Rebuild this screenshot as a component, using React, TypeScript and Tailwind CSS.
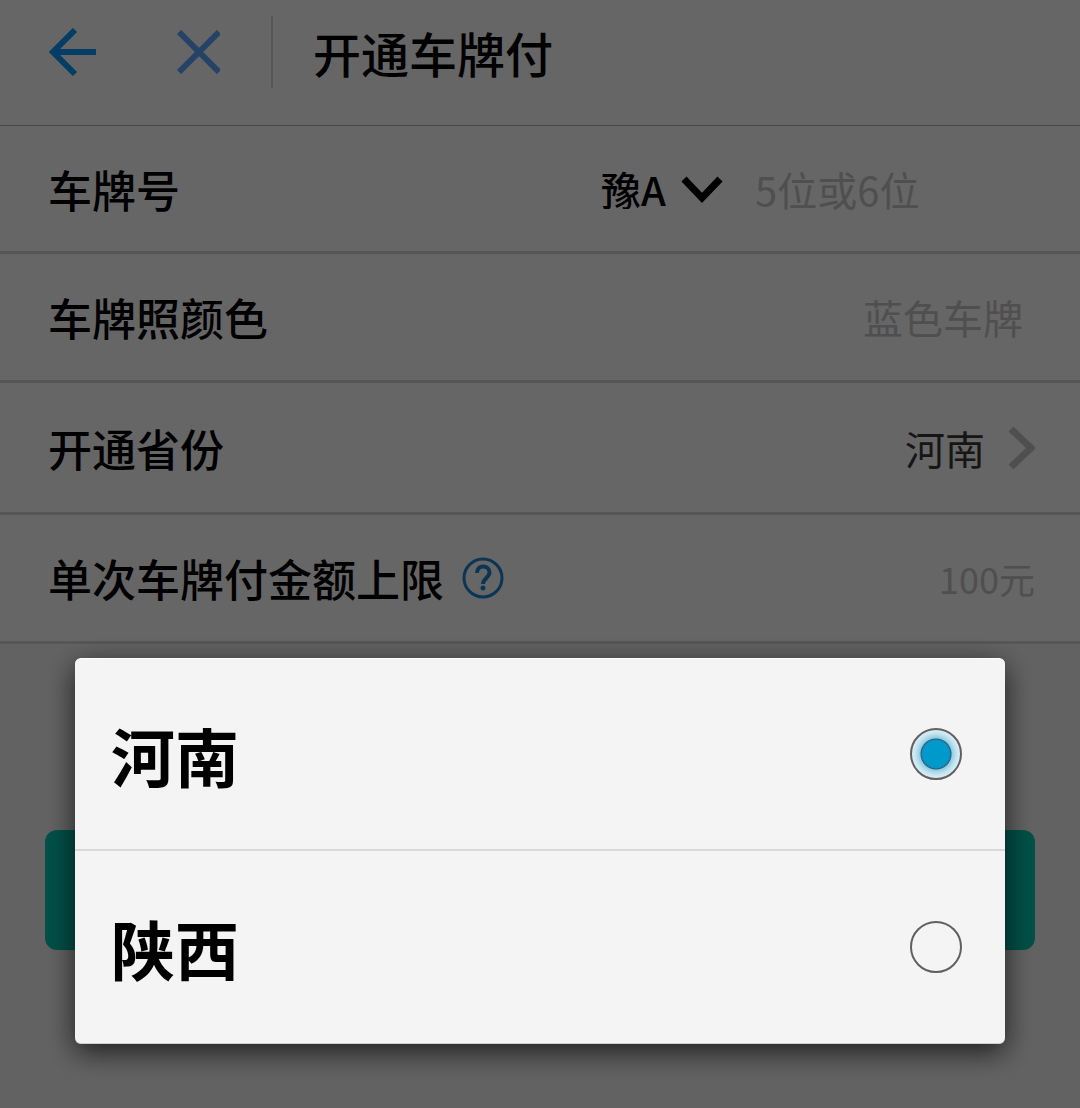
import { useState, type ReactNode } from "react";
import clsx from "clsx";

const provinces = ["河南", "陕西"];

function BackIcon() {
  return (
    <svg width="48" height="48" viewBox="0 0 48 48" fill="none" stroke="#0c9bff" strokeWidth="6">
      <path d="M27 2 5 24l22 22M5 24h43" />
    </svg>
  );
}

function CloseIcon() {
  return (
    <svg width="44" height="44" viewBox="0 0 44 44" fill="none" stroke="#5ea8ff" strokeWidth="6">
      <path d="M3 2l40 40M43 2 3 42" />
    </svg>
  );
}

function HelpIcon() {
  return (
    <svg width="42" height="42" viewBox="0 0 42 42" fill="none" stroke="#1a86d4" strokeWidth="3">
      <circle cx="21" cy="21" r="19" />
      <path
        d="M15 16c0-4 2.500-6.500 6.200-6.500s6.300 2.300 6.300 6c0 5-6.500 6-6.500 11.500"
        strokeWidth="4"
      />
      <circle cx="21" cy="31" r="2.500" fill="#1a86d4" stroke="none" />
    </svg>
  );
}

function FormRow({ className, children }: { className: string; children: ReactNode }) {
  return (
    <div
      className={clsx(
        "flex items-center justify-between border-b-3 border-[#d6d6d6] pr-[45px] pl-12",
        className
      )}
    >
      {children}
    </div>
  );
}

export default function App() {
  const [province, setProvince] = useState("河南");
  const [plate, setPlate] = useState("");

  return (
    <div className="min-h-screen bg-[#f4f4f4] font-['Noto_Sans_CJK_SC',sans-serif] text-[44px] leading-none font-medium text-black">
      <div className="bg-white">
        <header className="flex items-center border-b border-[#b0b0b0] px-12 pt-4 pb-[37px]">
          <button aria-label="返回">
            <BackIcon />
          </button>
          <button aria-label="关闭" className="ml-20">
            <CloseIcon />
          </button>
          <div className="ml-[51px] h-[72px] w-0.5 bg-[#d6d6d6]" />
          <h1 className="ml-10 text-[48px]">开通车牌付</h1>
        </header>

        <FormRow className="min-h-[128px]">
          <label htmlFor="plate">车牌号</label>
          <div className="flex items-center gap-8 text-[40px]">
            <div className="relative">
              <select
                aria-label="车牌归属地"
                className="w-[122px] appearance-none bg-transparent leading-none"
              >
                <option>豫A</option>
              </select>
              <svg
                className="pointer-events-none absolute top-1/2 right-0 -translate-y-1/2"
                width="42"
                height="30"
                viewBox="0 0 42 30"
                fill="none"
                stroke="#000"
                strokeWidth="7"
              >
                <path d="M3 5l18 19L39 5" />
              </svg>
            </div>
            <input
              id="plate"
              value={plate}
              onChange={(e) => setPlate(e.target.value)}
              placeholder="5位或6位"
              className="w-[280px] bg-transparent leading-none font-normal outline-none placeholder:text-[#c6c6c6]"
            />
          </div>
        </FormRow>

        <FormRow className="min-h-[129px]">
          <span>车牌照颜色</span>
          <span className="pr-3 text-[40px] font-normal text-[#c6c6c6]">蓝色车牌</span>
        </FormRow>

        <FormRow className="min-h-[132px]">
          <span>开通省份</span>
          <button className="flex items-center gap-6 text-[40px] font-normal text-[#383838]">
            {province}
            <svg width="26" height="44" viewBox="0 0 26 44" fill="none" stroke="#c6c6c6" strokeWidth="7">
              <path d="M2 3l20 19L2 41" />
            </svg>
          </button>
        </FormRow>

        <FormRow className="min-h-[129px]">
          <div className="flex items-center gap-[18px]">
            <span>单次车牌付金额上限</span>
            <button aria-label="额度说明">
              <HelpIcon />
            </button>
          </div>
          <span className="text-[36px] font-normal text-[#c6c6c6]">100元</span>
        </FormRow>
      </div>

      <div className="px-[45px] pt-[186px]">
        <button
          aria-label="立即开通"
          className="block h-[120px] w-full rounded-xl bg-[#05c8b2]"
        />
      </div>

      <div className="fixed inset-0 flex items-end bg-black/60 px-[75px] pb-16">
        <div
          role="dialog"
          aria-label="开通省份"
          className="w-full divide-y-2 divide-[#d9d9d9] rounded-md border-t border-b border-t-white border-b-[#d0d0d0] bg-[#f4f4f4] text-[64px] font-bold shadow-[0_8px_28px_rgba(0,0,0,0.7)]"
        >
          {provinces.map((name) => (
            <label key={name} className="flex h-48 items-center justify-between pr-[43px] pl-9">
              {name}
              <input
                type="radio"
                name="province"
                checked={province === name}
                onChange={() => setProvince(name)}
                className="size-[52px] appearance-none rounded-full border-2 border-[#606060] checked:bg-[radial-gradient(circle,#0099cc_13px,#1489b8_14px,#2a5d74_15px,#8fcde4_16px,#bfe2ef_20px,#e3f1f6_25px)]"
              />
            </label>
          ))}
        </div>
      </div>
    </div>
  );
}
